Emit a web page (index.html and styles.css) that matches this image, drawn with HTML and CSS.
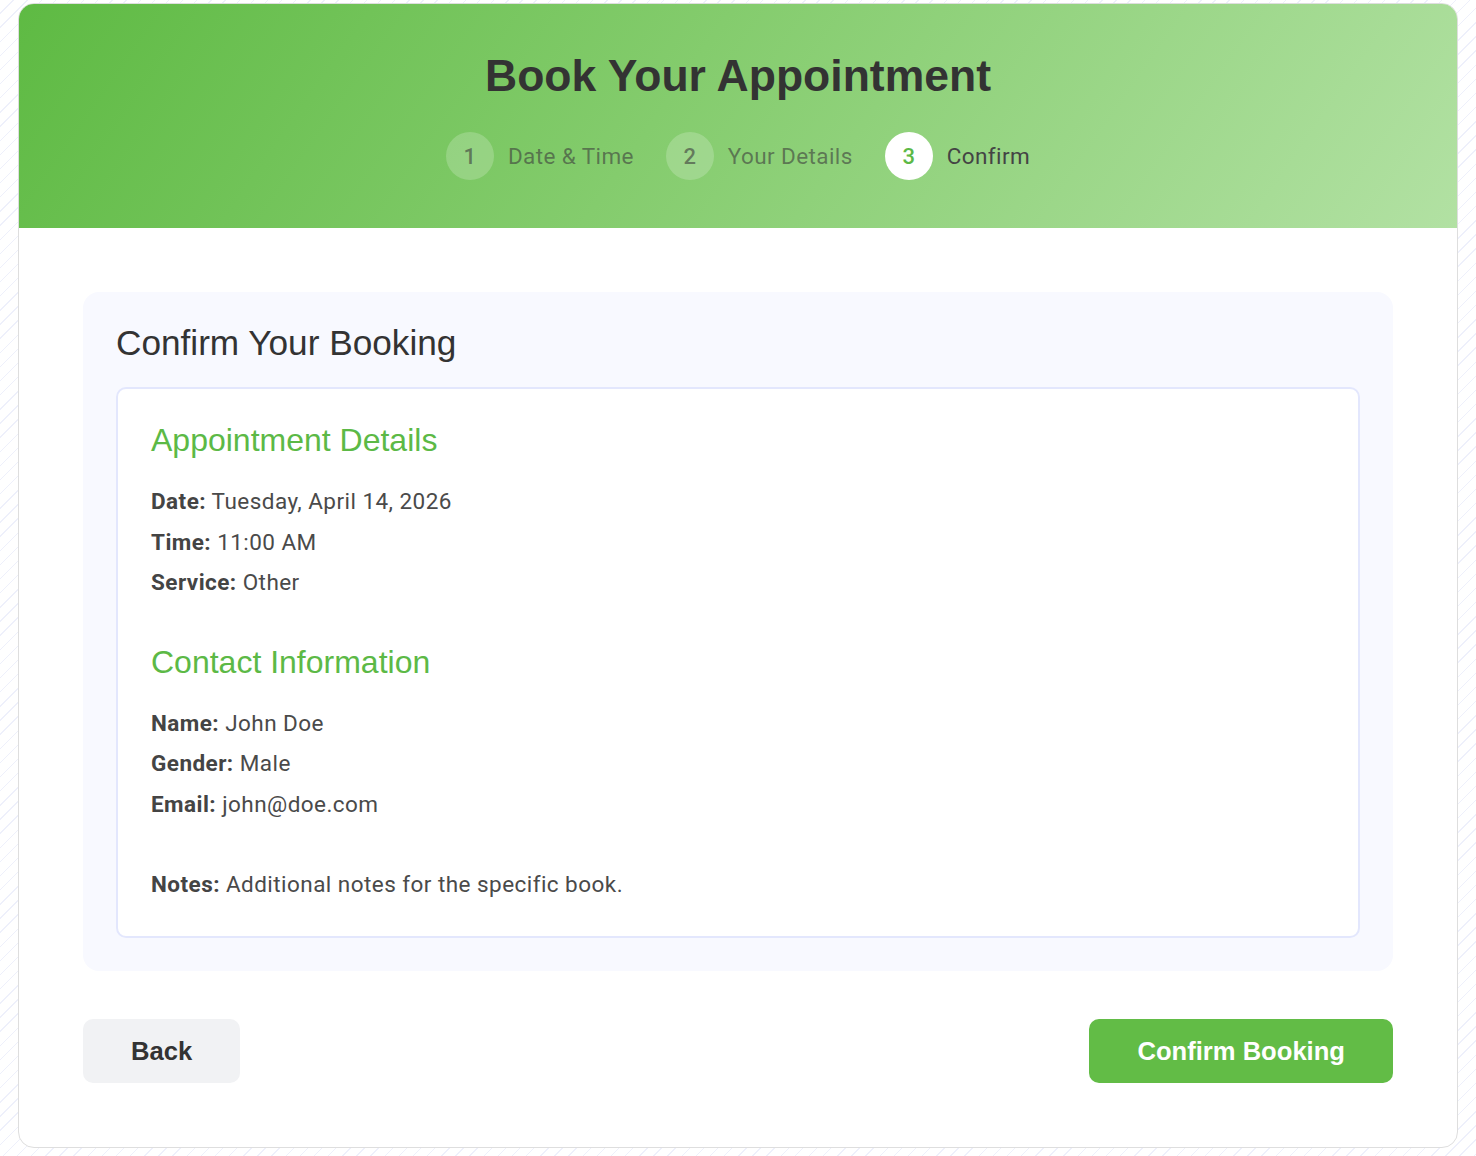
FILE: index.html
```html
<!DOCTYPE html>
<html lang="en">
<head>
<meta charset="utf-8">
<title>Book Your Appointment</title>
<link rel="stylesheet" href="styles.css">
</head>
<body>
<div class="card">
  <header class="header">
    <h1 class="title">Book Your Appointment</h1>
    <div class="steps">
      <div class="step"><span class="step-num">1</span><span class="step-label">Date &amp; Time</span></div>
      <div class="step"><span class="step-num">2</span><span class="step-label">Your Details</span></div>
      <div class="step active"><span class="step-num">3</span><span class="step-label">Confirm</span></div>
    </div>
  </header>
  <main class="content">
    <section class="panel">
      <h2 class="panel-title">Confirm Your Booking</h2>
      <div class="summary">
        <div class="section">
          <h3 class="section-title">Appointment Details</h3>
          <p class="row"><strong>Date:</strong> Tuesday, April 14, 2026</p>
          <p class="row"><strong>Time:</strong> 11:00 AM</p>
          <p class="row"><strong>Service:</strong> Other</p>
        </div>
        <div class="section">
          <h3 class="section-title">Contact Information</h3>
          <p class="row"><strong>Name:</strong> John Doe</p>
          <p class="row"><strong>Gender:</strong> Male</p>
          <p class="row"><strong>Email:</strong> john@doe.com</p>
        </div>
        <p class="row notes"><strong>Notes:</strong> Additional notes for the specific book.</p>
      </div>
    </section>
    <div class="actions">
      <button class="btn btn-back">Back</button>
      <button class="btn btn-confirm">Confirm Booking</button>
    </div>
  </main>
</div>
</body>
</html>
```

FILE: styles.css
```css
html, body {
  margin: 0;
  padding: 0;
}
body {
  padding: 3px 18px 9px;
  background-color: #ffffff;
  background-image: repeating-linear-gradient(135deg, #ffffff 0px, #ffffff 9px, #eef0fb 9px, #eef0fb 10px);
  font-family: "Liberation Sans", Arial, sans-serif;
  color: #333;
}
.card {
  background: #ffffff;
  border: 1px solid #dedede;
  border-radius: 16px;
  overflow: hidden;
}
.header {
  margin: -1px -1px 0;
  height: 225px;
  box-sizing: border-box;
  padding-top: 47px;
  background: linear-gradient(125deg, #5eba43 0%, #84cc6d 45%, #b2e1a3 100%);
  display: flex;
  flex-direction: column;
  align-items: center;
}
.title {
  margin: 0;
  font-family: "Liberation Sans", Arial, sans-serif;
  font-weight: 700;
  font-size: 44.5px;
  line-height: 52px;
  color: #333;
}
.steps {
  margin-top: 30px;
  display: flex;
  align-items: center;
  gap: 32px;
}
.step {
  display: flex;
  align-items: center;
  gap: 14px;
}
.step-num {
  width: 48px;
  height: 48px;
  border-radius: 50%;
  background: rgba(255, 255, 255, 0.2);
  display: flex;
  align-items: center;
  justify-content: center;
  font-family: Roboto, "Liberation Sans", sans-serif;
  font-size: 22px;
  font-weight: 500;
  color: rgba(60, 60, 60, 0.6);
}
.step-label {
  font-family: Roboto, "Liberation Sans", sans-serif;
  font-size: 22.5px;
  letter-spacing: 0.4px;
  color: rgba(60, 60, 60, 0.6);
}
.step.active .step-num {
  background: #ffffff;
  color: #5cb946;
}
.step.active .step-label {
  color: #444;
}
.content {
  padding: 64px 64px 64px;
}
.panel {
  background: #f8f9ff;
  border-radius: 16px;
  padding: 30px 33px 33px;
}
.panel-title {
  margin: 0 0 23px;
  font-family: "Liberation Sans", Arial, sans-serif;
  font-weight: 400;
  font-size: 35.2px;
  line-height: 42px;
  color: #333;
}
.summary {
  background: #ffffff;
  border: 2px solid #e3e7fd;
  border-radius: 10px;
  padding: 32px 33px 36px;
  display: flex;
  flex-direction: column;
}
.section + .section {
  margin-top: 35px;
}
.section-title {
  margin: 0 0 27px;
  font-family: "Liberation Sans", Arial, sans-serif;
  font-weight: 400;
  font-size: 32px;
  line-height: 38px;
  color: #5cb946;
}
.row {
  margin: 0 0 10px;
  font-family: Roboto, "Liberation Sans", sans-serif;
  font-size: 22.5px;
  letter-spacing: 0.45px;
  line-height: 30.5px;
  color: #4a4a4a;
}
.row strong {
  font-weight: 700;
  color: #444;
}
.notes {
  margin: 40px 0 0;
}
.actions {
  margin-top: 48px;
  display: flex;
  justify-content: space-between;
  align-items: center;
}
.btn {
  border: none;
  border-radius: 10px;
  padding: 16px 48px;
  font-family: "Liberation Sans", Arial, sans-serif;
  font-weight: 700;
  font-size: 25.6px;
  line-height: 32px;
  cursor: pointer;
}
.btn-back {
  background: #f1f2f4;
  color: #333;
}
.btn-confirm {
  background: #62bc46;
  color: #ffffff;
}
```
